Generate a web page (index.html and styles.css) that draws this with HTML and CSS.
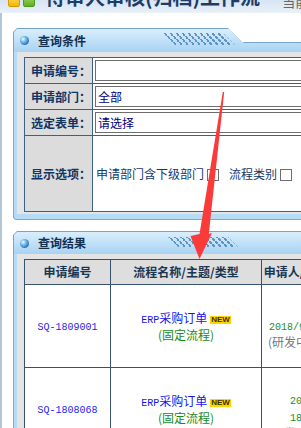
FILE: index.html
```html
<!DOCTYPE html>
<html lang="zh-CN">
<head>
  <meta charset="UTF-8">
  <meta name="viewport" content="width=device-width, initial-scale=1.0">
  <title>待审人审核(归档)工作流</title>
  <link rel="stylesheet" href="styles.css">
</head>
<body>
  <div class="topbar">
      <span class="logo"><i class="sq yellow"></i><i class="sq green"></i></span>
      <h1>待审人审核(归档)工作流</h1>
      <span class="where">当前位置：</span>
  </div>

  <div class="main">
      <!-- 查询条件 -->
      <div class="panel">
          <div class="panel-head step">
              <div class="panel-head-in">
                  <span class="ball"></span>
                  <h2>查询条件</h2>
                  <span class="stripes"></span>
              </div>
          </div>
          <div class="panel-frame">
              <div class="panel-body">
                  <table class="qtable">
                      <tr>
                          <td class="lab">申请编号：</td>
                          <td class="val"><input type="text" value=""></td>
                      </tr>
                      <tr>
                          <td class="lab">申请部门：</td>
                          <td class="val"><input type="text" value="全部"></td>
                      </tr>
                      <tr>
                          <td class="lab">选定表单：</td>
                          <td class="val"><input type="text" value="请选择"></td>
                      </tr>
                      <tr class="tall">
                          <td class="lab">显示选项：</td>
                          <td class="val opts">申请部门含下级部门<span class="chk"></span><span class="opt2">流程类别</span><span class="chk"></span></td>
                      </tr>
                  </table>
              </div>
          </div>
      </div>

      <!-- 查询结果 -->
      <div class="panel">
          <div class="panel-head short">
              <div class="panel-head-in">
                  <span class="ball"></span>
                  <h2>查询结果</h2>
                  <span class="stripes second"></span>
              </div>
          </div>
          <div class="panel-frame">
              <div class="panel-body">
                  <table class="rtable">
                      <tr>
                          <th class="c1">申请编号</th>
                          <th class="c2">流程名称/主题/类型</th>
                          <th class="c3">申请人/时间</th>
                          <th class="c4">当前状态</th>
                      </tr>
                      <tr>
                          <td><span class="num">SQ-1809001</span></td>
                          <td class="flow"><span class="num">ERP</span>采购订单<span class="new">NEW</span><br><span class="fixed">(固定流程)</span></td>
                          <td class="who"><span class="date">2018/9/28</span><br><span class="dept">(研发中心)</span></td>
                          <td></td>
                      </tr>
                      <tr>
                          <td><span class="num">SQ-1808068</span></td>
                          <td class="flow"><span class="num">ERP</span>采购订单<span class="new">NEW</span><br><span class="fixed">(固定流程)</span></td>
                          <td class="who"><span class="date">20<br>18</span><br><span class="dept">(研发中心)</span></td>
                          <td></td>
                      </tr>
                  </table>
              </div>
          </div>
      </div>
  </div>

  <!-- 标注箭头 -->
  <svg class="arrow" width="301" height="428" viewBox="0 0 301 428">
      <polygon points="222.8,92 224.2,92 208.8,234 212,233 199.5,259 190.5,236 199.5,234" fill="#fb3a3a"/>
  </svg>
</body>
</html>
```

FILE: styles.css
```css
html, body {
    margin: 0;
    overflow: hidden;
}
body {
    width: 301px;
    height: 428px;
    position: relative;
    background: #fff;
    font-family: "Noto Sans CJK SC", "Liberation Sans", sans-serif;
    font-size: 12px;
}
.topbar {
    height: 13px;
    overflow: hidden;
    display: flex;
    align-items: flex-start;
    background: linear-gradient(#d6e4f3, #e9f1f9);
}
.logo {
    display: flex;
    gap: 3px;
    margin: -6px 0 0 8px;
}
.sq {
    display: block;
    width: 12px;
    height: 13px;
    box-sizing: border-box;
    border-radius: 2px;
}
.sq.yellow {
    background: linear-gradient(#ffe27a, #f6b500);
    border: 1px solid #d99a00;
}
.sq.green {
    background: linear-gradient(#aadd6c, #5fae22);
    border: 1px solid #4c9a1a;
}
h1 {
    margin: -13px 0 0 10px;
    font-size: 20px;
    line-height: 20px;
    color: #1e3c68;
    white-space: nowrap;
}
.where {
    margin: -5px 0 0 22px;
    font-size: 13px;
    line-height: 13px;
    color: #666;
    white-space: nowrap;
}
.main {
    border-left: 2px solid #b4c5d6;
    padding: 15px 0 0 11px;
    height: 500px;
}
.panel {
    margin-bottom: 11px;
}
.panel-head {
    height: 24px;
    background: #76a3cc;
    clip-path: polygon(0 4px, 4px 0, 100% 0, 100% 100%, 0 100%);
}
.panel-head.step {
    clip-path: polygon(0 4px, 4px 0, 215px 0, 229px 14px, 100% 14px, 100% 100%, 0 100%);
}
.panel-head-in {
    height: 23px;
    margin-left: 1px;
    transform: translateY(1px);
    display: flex;
    align-items: center;
    background: linear-gradient(#d9eefc, #a8d3f3);
    clip-path: polygon(0 3px, 3px 0, 100% 0, 100% 100%, 0 100%);
}
.step .panel-head-in {
    clip-path: polygon(0 3px, 3px 0, 216px 0, 230px 14px, 100% 14px, 100% 100%, 0 100%);
}
.panel-head.short {
    height: 23px;
}
.short .panel-head-in {
    height: 22px;
}
.ball {
    width: 9px;
    height: 9px;
    margin-left: 6px;
    border-radius: 50%;
    background: radial-gradient(circle at 35% 35%, #eef8ff 0, #74b9ea 35%, #1d62ab 80%, #123f7a 100%);
}
h2 {
    margin: 0 0 0 9px;
    font-size: 12px;
    line-height: 14px;
    color: #15304f;
    white-space: nowrap;
}
.stripes {
    width: 60px;
    height: 12px;
    margin: -3px 0 0 83px;
    transform: skewX(45deg);
    background: repeating-linear-gradient(90deg, #5f93c4 0 2px, transparent 2px 6px);
}
.stripes.second {
    height: 10px;
    margin-left: 87px;
}
.panel-frame {
    border-left: 1px solid #80a9ce;
    border-bottom: 1px solid #80a9ce;
    border-bottom-left-radius: 4px;
    background: #b5dbf5;
    padding: 0 0 5px 3px;
}
.panel-body {
    background: #e4e4e4;
    padding: 5px 0 2px 7px;
}

/* 查询条件表 */
.qtable {
    border-collapse: collapse;
    width: 420px;
}
.qtable td {
    border: 1px solid #3d6088;
    padding: 0;
    height: 25px;
}
.qtable .lab {
    width: 61px;
    padding-left: 6px;
    background: #dcdcdc;
    font-weight: bold;
    color: #0f3463;
    white-space: nowrap;
}
.qtable .val {
    background: #fff;
    padding-left: 2px;
}
.qtable input {
    display: block;
    width: 300px;
    height: 21px;
    box-sizing: border-box;
    border: 1px solid #6d6d6d;
    padding: 0 2px;
    margin: 0;
    font-family: "Noto Sans CJK SC", sans-serif;
    font-size: 12px;
    color: #000080;
    outline: none;
}
.qtable .tall td {
    height: 75px;
}
.qtable .opts {
    padding-left: 3px;
    color: #12386c;
    white-space: nowrap;
}
.chk {
    display: inline-block;
    width: 12px;
    height: 12px;
    box-sizing: border-box;
    border: 1px solid #6e6e6e;
    background: #fff;
    margin-left: 3px;
    vertical-align: -2px;
}
.opt2 {
    margin-left: 10px;
}

/* 查询结果表 */
.rtable {
    border-collapse: collapse;
    table-layout: fixed;
    width: 440px;
}
.rtable th,
.rtable td {
    border: 1px solid #36526e;
    padding: 0;
    text-align: center;
    white-space: nowrap;
    line-height: 14px;
}
.rtable th {
    height: 24px;
    background: #dedede;
    color: #1a3552;
    font-size: 12px;
}
.rtable td {
    height: 82px;
    background: #fff;
}
.rtable .c1 {
    width: 85px;
}
.rtable .c2 {
    width: 150px;
}
.rtable .c3 {
    width: 68px;
}
.num {
    font-family: "Liberation Mono", monospace;
    font-size: 10px;
    color: #2424ee;
}
.flow {
    color: #1414f0;
}
.flow .num {
    color: #1414f0;
}
.new {
    display: inline-block;
    margin-left: 3px;
    padding: 0 1px;
    background: #ffd400;
    color: #3a3000;
    font: bold 8px/8px "Liberation Sans", sans-serif;
    vertical-align: 1px;
}
.fixed {
    color: #1a8a1a;
}
.rtable .who {
    padding-top: 14px;
    height: 68px;
}
.date {
    font-family: "Liberation Mono", monospace;
    font-size: 10px;
    color: #1f8a1f;
}
.dept {
    color: #777;
}
.arrow {
    position: absolute;
    top: 0;
    left: 0;
    pointer-events: none;
}
```
